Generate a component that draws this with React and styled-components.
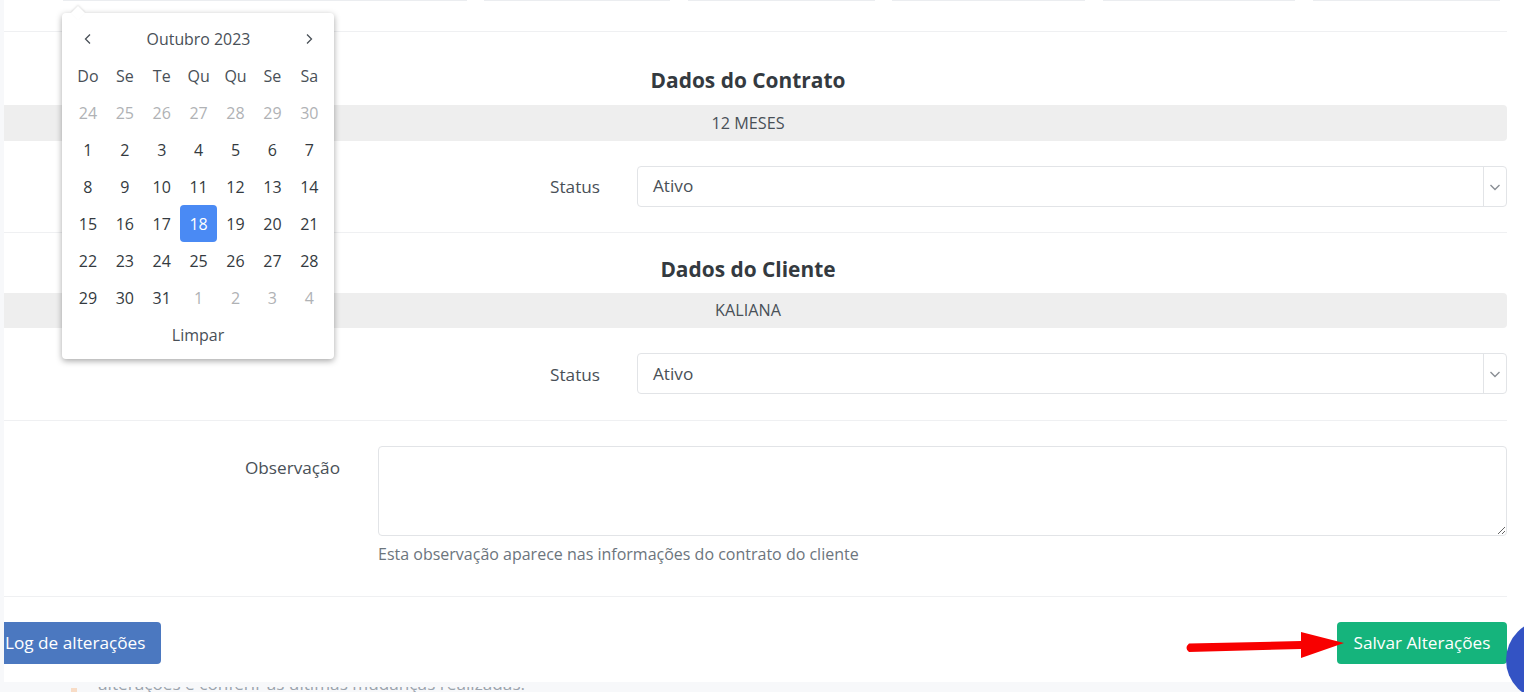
import React from "react";
import styled, { createGlobalStyle } from "styled-components";

const GlobalStyle = createGlobalStyle`
    html, body {
        margin: 0;
        padding: 0;
        height: 692px;
        overflow: hidden;
        background: #f7f8fa;
    }
    body {
        font-family: "Open Sans", "Liberation Sans", sans-serif;
        font-size: 16px;
        color: #495057;
    }
`;

const weeks = [
    [[24, 1], [25, 1], [26, 1], [27, 1], [28, 1], [29, 1], [30, 1]],
    [[1], [2], [3], [4], [5], [6], [7]],
    [[8], [9], [10], [11], [12], [13], [14]],
    [[15], [16], [17], [18, 0, 1], [19], [20], [21]],
    [[22], [23], [24], [25], [26], [27], [28]],
    [[29], [30], [31], [1, 1], [2, 1], [3, 1], [4, 1]],
];
const dayNames = ["Do", "Se", "Te", "Qu", "Qu", "Se", "Sa"];
const topInputs = [
    [63, 404], [484, 186], [688, 187], [892, 193], [1103, 192], [1313, 187],
];

const Chevron = () => (
    <svg width="12" height="12" viewBox="0 0 12 12" fill="none" stroke="#8a8f95" strokeWidth="1.4">
        <path d="M1.5 4l4.5 4.5L10.5 4" />
    </svg>
);

const Field = ({ value, raised }) => (
    <StatusRow>
        <StatusLabel $raised={raised}>Status</StatusLabel>
        <SelectBox>
            <SelectValue $raised={raised}>{value}</SelectValue>
            <SelectArrow><Chevron /></SelectArrow>
        </SelectBox>
    </StatusRow>
);

const App = () => {
    return (
        <Page>
            <GlobalStyle />
            <BehindText>alterações e conferir as últimas mudanças realizadas.</BehindText>
            <BehindMark />
            <Card>
                <TopStrip>
                    {topInputs.map((item, idx) => (
                        <TopInput key={idx} $left={item[0]} $width={item[1]} />
                    ))}
                </TopStrip>
                <SectionOne>
                    <Title>Dados do Contrato</Title>
                    <ReadOnly $tall>12 MESES</ReadOnly>
                    <Field value="Ativo" raised />
                </SectionOne>
                <SectionTwo>
                    <Title $low>Dados do Cliente</Title>
                    <ReadOnly>KALIANA</ReadOnly>
                    <Field value="Ativo" />
                </SectionTwo>
                <ObsSection>
                    <ObsLabel>Observação</ObsLabel>
                    <ObsField>
                        <ObsArea />
                        <ObsHint>Esta observação aparece nas informações do contrato do cliente</ObsHint>
                    </ObsField>
                </ObsSection>
                <Footer>
                    <LogButton>Log de alterações</LogButton>
                    <SaveButton>Salvar Alterações</SaveButton>
                </Footer>
            </Card>

            <RedArrow width="160" height="34" viewBox="0 0 160 34">
                <path d="M5 14.5L117 12L117 3L160 14L117 29L117 20L5 23Q0 19 5 14.5Z" fill="#f80000" />
            </RedArrow>
            <ChatBubble />

            <Calendar>
                <CalHeader>
                    <svg width="10" height="12" viewBox="0 0 10 12" fill="none" stroke="#495057" strokeWidth="1.3"><path d="M7 1.5L2.5 6L7 10.5" /></svg>
                    <CalTitle>Outubro 2023</CalTitle>
                    <svg width="10" height="12" viewBox="0 0 10 12" fill="none" stroke="#495057" strokeWidth="1.3"><path d="M3 1.5L7.5 6L3 10.5" /></svg>
                </CalHeader>
                <CalGrid>
                    {dayNames.map((d, idx) => <DayName key={idx}>{d}</DayName>)}
                    {weeks.flat().map((d, idx) => (
                        <Day key={idx} $muted={d[1]} $active={d[2]}>{d[0]}</Day>
                    ))}
                </CalGrid>
                <ClearLink>Limpar</ClearLink>
            </Calendar>
        </Page>
    );
};

export default App;

const Page = styled.div`
    position: relative;
    width: 1524px;
    height: 692px;
    overflow: hidden;
    background: #f7f8fa;
`;

const Card = styled.div`
    position: relative;
    margin-left: 4px;
    width: 1520px;
    height: 682px;
    background: #fff;
    display: flex;
    flex-direction: column;
    box-shadow: 0 5px 0 #f7f8fa;
`;

const TopStrip = styled.div`
    position: relative;
    height: 32px;
    width: 1503px;
    border-bottom: 1px solid #eff0f2;
    box-sizing: border-box;
    flex: none;
`;

const TopInput = styled.div`
    position: absolute;
    top: 0;
    left: ${(p) => p.$left - 4}px;
    width: ${(p) => p.$width}px;
    height: 1px;
    background: #ebedf0;
`;

const SectionOne = styled.section`
    width: 1503px;
    height: 201px;
    box-sizing: border-box;
    border-bottom: 1px solid #eff0f2;
    padding-top: 36px;
    flex: none;
`;

const SectionTwo = styled(SectionOne)`
    height: 188px;
    padding-top: 23px;
`;

const Title = styled.h5`
    margin: 0;
    height: 24px;
    line-height: ${(p) => (p.$low ? 27 : 25)}px;
    font-size: 20.9px;
    font-weight: 700;
    color: #343a40;
    text-align: center;
    padding-right: 15px;
`;

const ReadOnly = styled.div`
    margin-top: 13px;
    height: ${(p) => (p.$tall ? 36 : 35)}px;
    line-height: ${(p) => (p.$tall ? 36 : 35)}px;
    background: #eeeeee;
    border-radius: 0 4px 4px 0;
    text-align: center;
    font-size: 16.2px;
    color: #495057;
    padding-right: 15px;
`;

const StatusRow = styled.div`
    display: flex;
    margin-top: 25px;
    height: 41px;
`;

const StatusLabel = styled.label`
    width: 596px;
    text-align: right;
    font-size: 17.2px;
    line-height: ${(p) => (p.$raised ? 41 : 43)}px;
    color: #495057;
    flex: none;
`;

const SelectBox = styled.div`
    margin-left: 37px;
    flex: 1;
    display: flex;
    border: 1px solid #e2e4e7;
    border-radius: 4px;
    box-sizing: border-box;
`;

const SelectValue = styled.div`
    flex: 1;
    padding-left: 15px;
    font-size: 17.2px;
    line-height: ${(p) => (p.$raised ? 37 : 39)}px;
    color: #495057;
`;

const SelectArrow = styled.div`
    width: 22px;
    border-left: 1px solid #e2e4e7;
    display: flex;
    align-items: center;
    justify-content: center;
`;

const ObsSection = styled.section`
    width: 1503px;
    height: 176px;
    box-sizing: border-box;
    border-bottom: 1px solid #eff0f2;
    padding-top: 25px;
    display: flex;
    flex: none;
`;

const ObsLabel = styled.label`
    width: 336px;
    text-align: right;
    font-size: 17.2px;
    line-height: 43px;
    color: #495057;
    flex: none;
`;

const ObsField = styled.div`
    margin-left: 38px;
    flex: 1;
`;

const ObsArea = styled.textarea`
    display: block;
    width: 100%;
    height: 90px;
    box-sizing: border-box;
    border: 1px solid #e2e4e7;
    border-radius: 4px;
    background: #fff;
    outline: none;
`;

const ObsHint = styled.div`
    margin-top: 7px;
    font-size: 16px;
    line-height: 22px;
    color: #6c757d;
`;

const Footer = styled.div`
    width: 1503px;
    margin-top: 25px;
    display: flex;
    justify-content: space-between;
`;

const BaseButton = styled.button`
    height: 42px;
    border: 0;
    color: #fff;
    font-family: inherit;
    font-size: 17.2px;
    line-height: 40px;
    padding: 0;
`;

const LogButton = styled(BaseButton)`
    width: 157px;
    background: #4b78c0;
    border-radius: 0 4px 4px 0;
    text-align: left;
    padding-left: 1px;
`;

const SaveButton = styled(BaseButton)`
    width: 170px;
    background: #15b47c;
    border-radius: 4px;
`;

const RedArrow = styled.svg`
    position: absolute;
    left: 1184px;
    top: 629px;
`;

const ChatBubble = styled.div`
    position: absolute;
    left: 1506px;
    top: 620px;
    width: 80px;
    height: 80px;
    border-radius: 50%;
    background: #3353c4;
`;

const BehindText = styled.div`
    position: absolute;
    left: 98px;
    top: 672px;
    font-size: 17.2px;
    line-height: 24px;
    color: #9aa3ad;
    white-space: nowrap;
`;

const BehindMark = styled.div`
    position: absolute;
    left: 71px;
    top: 688px;
    width: 6px;
    height: 4px;
    background: #f8dcc6;
`;

const Calendar = styled.div`
    position: absolute;
    left: 62px;
    top: 13px;
    width: 272px;
    height: 346px;
    box-sizing: border-box;
    background: #fff;
    border-radius: 4px;
    box-shadow: 0 2px 6px rgba(0, 0, 0, 0.35);
    &::before {
        content: "";
        position: absolute;
        left: 11px;
        top: -5px;
        width: 10px;
        height: 10px;
        background: #fff;
        transform: rotate(45deg);
        box-shadow: -1px -1px 2px rgba(0, 0, 0, 0.1);
    }
`;

const CalHeader = styled.div`
    position: relative;
    height: 37px;
    padding: 14px 20px 0 21px;
    box-sizing: border-box;
    display: flex;
    align-items: center;
    justify-content: space-between;
`;

const CalTitle = styled.div`
    font-size: 15.9px;
    color: #495057;
`;

const CalGrid = styled.div`
    margin: 7px 0 0 7.5px;
    display: grid;
    grid-template-columns: repeat(7, 36.9px);
    grid-auto-rows: 37px;
`;

const DayName = styled.div`
    display: flex;
    align-items: center;
    justify-content: center;
    font-size: 16px;
    color: #495057;
`;

const Day = styled.div`
    display: flex;
    align-items: center;
    justify-content: center;
    font-size: 16px;
    border-radius: 4px;
    color: ${(p) => (p.$active ? "#fff" : p.$muted ? "#b0b2b5" : "#343a40")};
    background: ${(p) => (p.$active ? "#4a8af4" : "transparent")};
`;

const ClearLink = styled.div`
    height: 37px;
    line-height: 39px;
    text-align: center;
    font-size: 16px;
    color: #495057;
`;
